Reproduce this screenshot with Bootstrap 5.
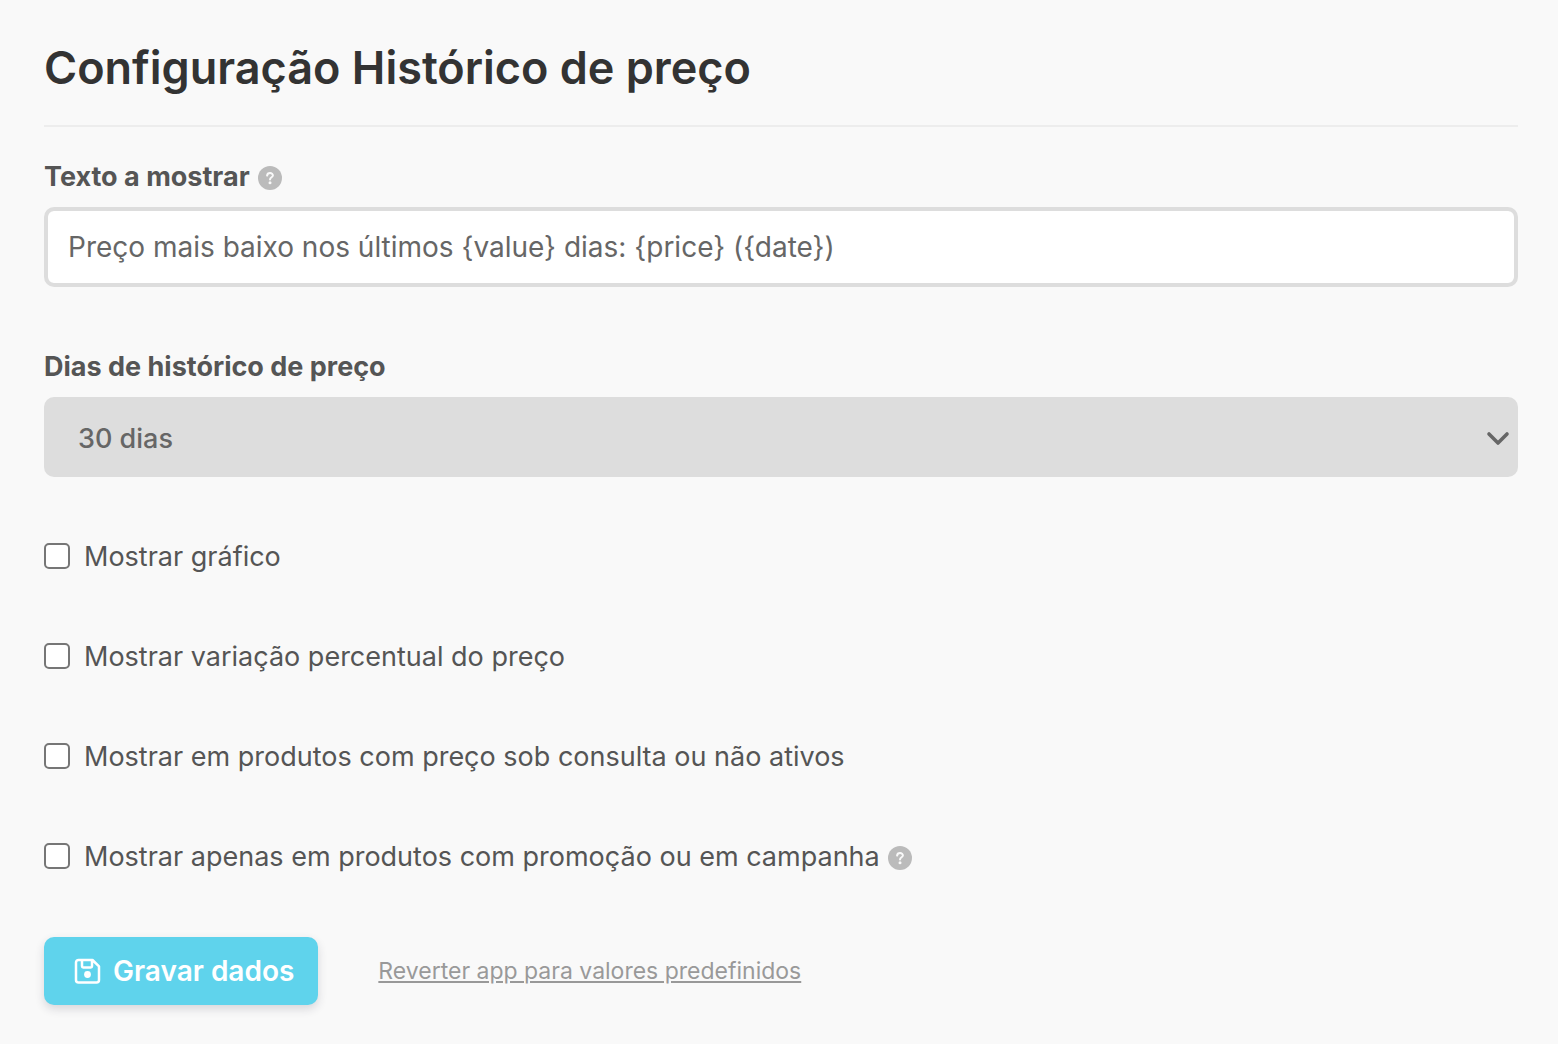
<!DOCTYPE html>
<html lang="pt">
<head>
<meta charset="utf-8">
<meta name="viewport" content="width=device-width, initial-scale=1">
<title>Configuração Histórico de preço</title>
<link href="https://cdn.jsdelivr.net/npm/bootstrap@5.3.0/dist/css/bootstrap.min.css" rel="stylesheet">
<style>
body{background:#f9f9f9;color:#555;font-family:Inter,"Liberation Sans",sans-serif;font-size:27px;line-height:40px}
.settings{padding:40px 40px 36px 44px}
.settings h1{font-size:45px;line-height:56px;font-weight:600;color:#333;padding-bottom:29px;margin-bottom:30px;border-bottom:2px solid #ededed}
.field-label{font-weight:700}
.field{margin-bottom:60px}
.field .form-control,.field .form-select{height:80px;margin-top:10px;color:#666;border-radius:10px}
.field .form-control{border:4px solid #ddd;padding:0 20px;font-size:28px}
.field .form-select{border:0;background-color:#ddd;padding:4px 60px 0 34px;font-size:27px;font-weight:500;background-image:url("data:image/svg+xml,%3csvg xmlns='http://www.w3.org/2000/svg' viewBox='0 0 24 16'%3e%3cpath d='M3 3l9 9 9-9' fill='none' stroke='%23666' stroke-width='3.600' stroke-linecap='round' stroke-linejoin='round'/%3e%3c/svg%3e");background-size:24px 16px;background-position:right 8px top 34px}
.option{margin-bottom:60px}
.option .form-check-input{width:26px;height:26px;margin:0 14px 2px 0;border:2px solid #767676;border-radius:5px}
.hint{width:24px;height:24px;margin-top:2px}
.save{height:68px;padding:0 24px 0 30px;gap:12px;border:0;border-radius:10px;background:#5fd3ec;color:#fff;font-size:28px;font-weight:600;box-shadow:0 4px 10px rgba(40,40,60,.16)}
.save:hover{background:#48c8e4;color:#fff}
.actions{gap:60px}
.revert{font-size:23px;color:#999}
</style>
</head>
<body>
<svg class="d-none" aria-hidden="true">
<symbol id="help" viewBox="0 0 24 24"><circle cx="12" cy="12" r="12" fill="#bbb"/><path d="M9.100 9.600C9.400 6.200 15 6.400 14.900 9.500C14.800 11.300 12 11.300 12 13.400" fill="none" stroke="#f9f9f9" stroke-width="2" stroke-linecap="round"/><circle cx="12" cy="16.800" r="1.500" fill="#f9f9f9"/></symbol>
</svg>
<main class="settings">
<h1>Configuração Histórico de preço</h1>
<form>
<div class="field">
<div class="d-flex align-items-center gap-2"><label class="field-label" for="texto">Texto a mostrar</label><svg class="hint" role="img" aria-label="Ajuda"><use href="#help"/></svg></div>
<input class="form-control" id="texto" type="text" value="Preço mais baixo nos últimos {value} dias: {price} ({date})">
</div>
<div class="field">
<label class="field-label d-block" for="dias">Dias de histórico de preço</label>
<select class="form-select" id="dias"><option>30 dias</option></select>
</div>
<div class="option d-flex align-items-center"><input class="form-check-input" type="checkbox" id="grafico"><label for="grafico">Mostrar gráfico</label></div>
<div class="option d-flex align-items-center"><input class="form-check-input" type="checkbox" id="variacao"><label for="variacao">Mostrar variação percentual do preço</label></div>
<div class="option d-flex align-items-center"><input class="form-check-input" type="checkbox" id="consulta"><label for="consulta">Mostrar em produtos com preço sob consulta ou não ativos</label></div>
<div class="option d-flex align-items-center"><input class="form-check-input" type="checkbox" id="promocao"><label class="me-2" for="promocao">Mostrar apenas em produtos com promoção ou em campanha</label><svg class="hint" role="img" aria-label="Ajuda"><use href="#help"/></svg></div>
<div class="actions d-flex align-items-center">
<button class="btn save d-flex align-items-center" type="submit"><svg width="27" height="28" viewBox="0 0 27 28" fill="none" stroke="#fff" stroke-width="2.500" stroke-linejoin="round" aria-hidden="true"><path d="M4.500 3H18.500L25 9.300V23a2.500 2.500 0 0 1-2.500 2.500h-18A2.500 2.500 0 0 1 2 23V5.500A2.500 2.500 0 0 1 4.500 3zM8 3v6.200a1.200 1.200 0 0 0 1.200 1.200h7.600a1.200 1.200 0 0 0 1.200-1.200V3"/><circle cx="13.500" cy="17.500" r="3.400" fill="#fff" stroke="none"/></svg>Gravar dados</button>
<a class="revert" href="#">Reverter app para valores predefinidos</a>
</div>
</form>
</main>
<script src="https://cdn.jsdelivr.net/npm/bootstrap@5.3.0/dist/js/bootstrap.bundle.min.js"></script>
</body>
</html>
